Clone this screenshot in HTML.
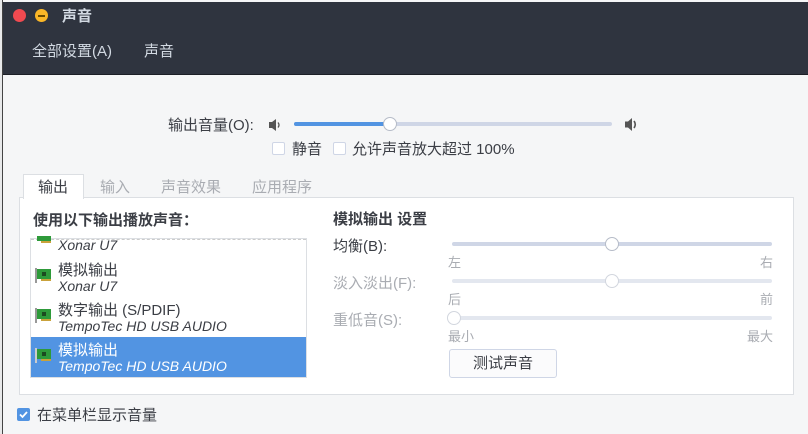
<!DOCTYPE html>
<html><head><meta charset="utf-8"><style>
*{margin:0;padding:0;box-sizing:border-box}
body{width:808px;height:434px;overflow:hidden;background:#f5f6f7;font-family:"Liberation Sans","Noto Sans CJK SC",sans-serif;font-size:15px;color:#3b3e45;position:relative}
.a{position:absolute;white-space:nowrap}
.hdr{position:absolute;left:2px;top:2px;width:806px;height:73px;background:#2f343f;border-bottom:1px solid #1c1f26}
.lb{position:absolute;left:0;top:0;width:2px;height:434px;background:#e8e9ea}
.lb2{position:absolute;left:2px;top:0;width:1px;height:434px;background:#444}
.cb{position:absolute;width:13px;height:13px;border:1px solid #cfd6e6;background:#fff;border-radius:2px}
.track{position:absolute;height:4px;border-radius:2px;background:#cfd6e6}
.thumb{position:absolute;width:14px;height:14px;border-radius:50%;background:#fff;border:1px solid #b6bcc8}
.gray{color:#a9acb2}
.sm{font-size:13px}
.it{font-style:italic;font-size:14px}
</style></head><body>
<div class="lb"></div>
<div class="hdr"></div>
<div class="a" style="left:13px;top:9px;width:13px;height:13px;border-radius:50%;background:#f04a50"></div>
<div class="a" style="left:35px;top:9px;width:13px;height:13px;border-radius:50%;background:#fbb727"></div>
<div class="a" style="left:38px;top:15px;width:7px;height:2px;background:#6b4b00"></div>
<div class="a" style="left:62px;top:5px;color:#d3dae3;font-size:15px;font-weight:bold">声音</div>
<div class="a" style="left:32px;top:40px;color:#d3dae3">全部设置(A)</div>
<div class="a" style="left:144px;top:40px;color:#d3dae3">声音</div>
<div class="lb2"></div>

<div class="a" style="left:168px;top:114px">输出音量(O):</div>
<svg class="a" style="left:268px;top:118px" width="14" height="14" viewBox="0 0 14 14"><path d="M1 4h3l4-3v12l-4-3H1z" fill="#555"/><path d="M10 4.5q2 2.5 0 5" stroke="#555" stroke-width="1.3" fill="none"/></svg>
<div class="track" style="left:294px;top:122px;width:318px"></div>
<div class="track" style="left:294px;top:122px;width:96px;background:#5294e2"></div>
<div class="thumb" style="left:383px;top:117px"></div>
<svg class="a" style="left:624px;top:117px" width="15" height="15" viewBox="0 0 15 15"><path d="M1 4.5h3l4-3.5v13l-4-3.5H1z" fill="#555"/><path d="M10 4q2.5 3.5 0 7" stroke="#555" stroke-width="1.6" fill="none"/></svg>
<div class="cb" style="left:272px;top:142px"></div>
<div class="a" style="left:292px;top:138px">静音</div>
<div class="cb" style="left:333px;top:142px"></div>
<div class="a" style="left:352px;top:138px">允许声音放大超过 100%</div>

<div class="a" style="left:19px;top:197px;width:775px;height:198px;background:#fff;border:1px solid #dcdfe3"></div>
<div class="a" style="left:23px;top:174px;width:61px;height:25px;background:#fff;border:1px solid #dcdfe3;border-bottom:none"></div>
<div class="a" style="left:38px;top:176px">输出</div>
<div class="a gray" style="left:100px;top:176px">输入</div>
<div class="a gray" style="left:161px;top:176px">声音效果</div>
<div class="a gray" style="left:252px;top:176px">应用程序</div>

<div class="a" style="left:33px;top:209px;font-weight:bold">使用以下输出播放声音：</div>
<div class="a" style="left:30px;top:238px;width:277px;height:140px;border:1px solid #dcdfe3;background:#fff;overflow:hidden">
 <div class="a" style="left:0;top:0;width:275px;border-top:1px dashed #ccc"></div>
 <div class="a it" style="left:27px;top:-2px">Xonar U7</div>
 <div class="a" style="left:27px;top:20px">模拟输出</div>
 <div class="a it" style="left:27px;top:39px">Xonar U7</div>
 <div class="a" style="left:27px;top:60px">数字输出 (S/PDIF)</div>
 <div class="a it" style="left:27px;top:79px">TempoTec HD USB AUDIO</div>
 <div class="a" style="left:0;top:98px;width:275px;height:40px;background:#5294e2"></div>
 <div class="a" style="left:27px;top:100px;color:#fff">模拟输出</div>
 <div class="a it" style="left:27px;top:119px;color:#fff">TempoTec HD USB AUDIO</div>
</div>
<svg class="a" style="left:35px;top:236px" width="18" height="10"><rect x="2" y="0" width="14" height="5" fill="#2e9a3a"/><rect x="6" y="5" width="10" height="2" fill="#c9a23b"/></svg>
<svg class="a" style="left:35px;top:268px" width="18" height="15"><rect x="0" y="0" width="2" height="15" fill="#999"/><rect x="2" y="1" width="14" height="10" fill="#2e9a3a"/><rect x="7" y="4" width="4" height="4" fill="#1b4a20"/><rect x="6" y="11" width="10" height="2" fill="#c9a23b"/></svg>
<svg class="a" style="left:35px;top:308px" width="18" height="15"><rect x="0" y="0" width="2" height="15" fill="#999"/><rect x="2" y="1" width="14" height="10" fill="#2e9a3a"/><rect x="7" y="4" width="4" height="4" fill="#1b4a20"/><rect x="6" y="11" width="10" height="2" fill="#c9a23b"/></svg>
<svg class="a" style="left:35px;top:348px" width="18" height="15"><rect x="0" y="0" width="2" height="15" fill="#ccc"/><rect x="2" y="1" width="14" height="10" fill="#2e9a3a"/><rect x="7" y="4" width="4" height="4" fill="#1b4a20"/><rect x="6" y="11" width="10" height="2" fill="#c9a23b"/></svg>

<div class="a" style="left:333px;top:208px;font-weight:bold">模拟输出 设置</div>
<div class="a" style="left:333px;top:235px">均衡(B):</div>
<div class="track" style="left:452px;top:242px;width:320px"></div>
<div class="thumb" style="left:605px;top:237px"></div>
<div class="a gray sm" style="left:448px;top:252px">左</div>
<div class="a gray sm" style="left:760px;top:252px">右</div>
<div class="a gray" style="left:333px;top:272px">淡入淡出(F):</div>
<div class="track" style="left:452px;top:279px;width:320px;background:#e3e7ef"></div>
<div class="thumb" style="left:605px;top:274px;border-color:#d2d6de"></div>
<div class="a gray sm" style="left:448px;top:289px">后</div>
<div class="a gray sm" style="left:760px;top:289px">前</div>
<div class="a gray" style="left:333px;top:309px">重低音(S):</div>
<div class="track" style="left:452px;top:316px;width:320px;background:#e3e7ef"></div>
<div class="thumb" style="left:447px;top:311px;border-color:#d2d6de"></div>
<div class="a gray sm" style="left:448px;top:326px">最小</div>
<div class="a gray sm" style="left:747px;top:326px">最大</div>
<div class="a" style="left:449px;top:349px;width:108px;height:29px;border:1px solid #cfd6e6;border-radius:3px;background:#fbfbfc;text-align:center;line-height:27px">测试声音</div>

<div class="a" style="left:17px;top:408px;width:13px;height:13px;background:#5294e2;border-radius:2px"></div>
<svg class="a" style="left:17px;top:408px" width="13" height="13"><path d="M3 6.5l2.5 2.5L10 4" stroke="#fff" stroke-width="1.8" fill="none"/></svg>
<div class="a" style="left:37px;top:404px">在菜单栏显示音量</div>
</body></html>
